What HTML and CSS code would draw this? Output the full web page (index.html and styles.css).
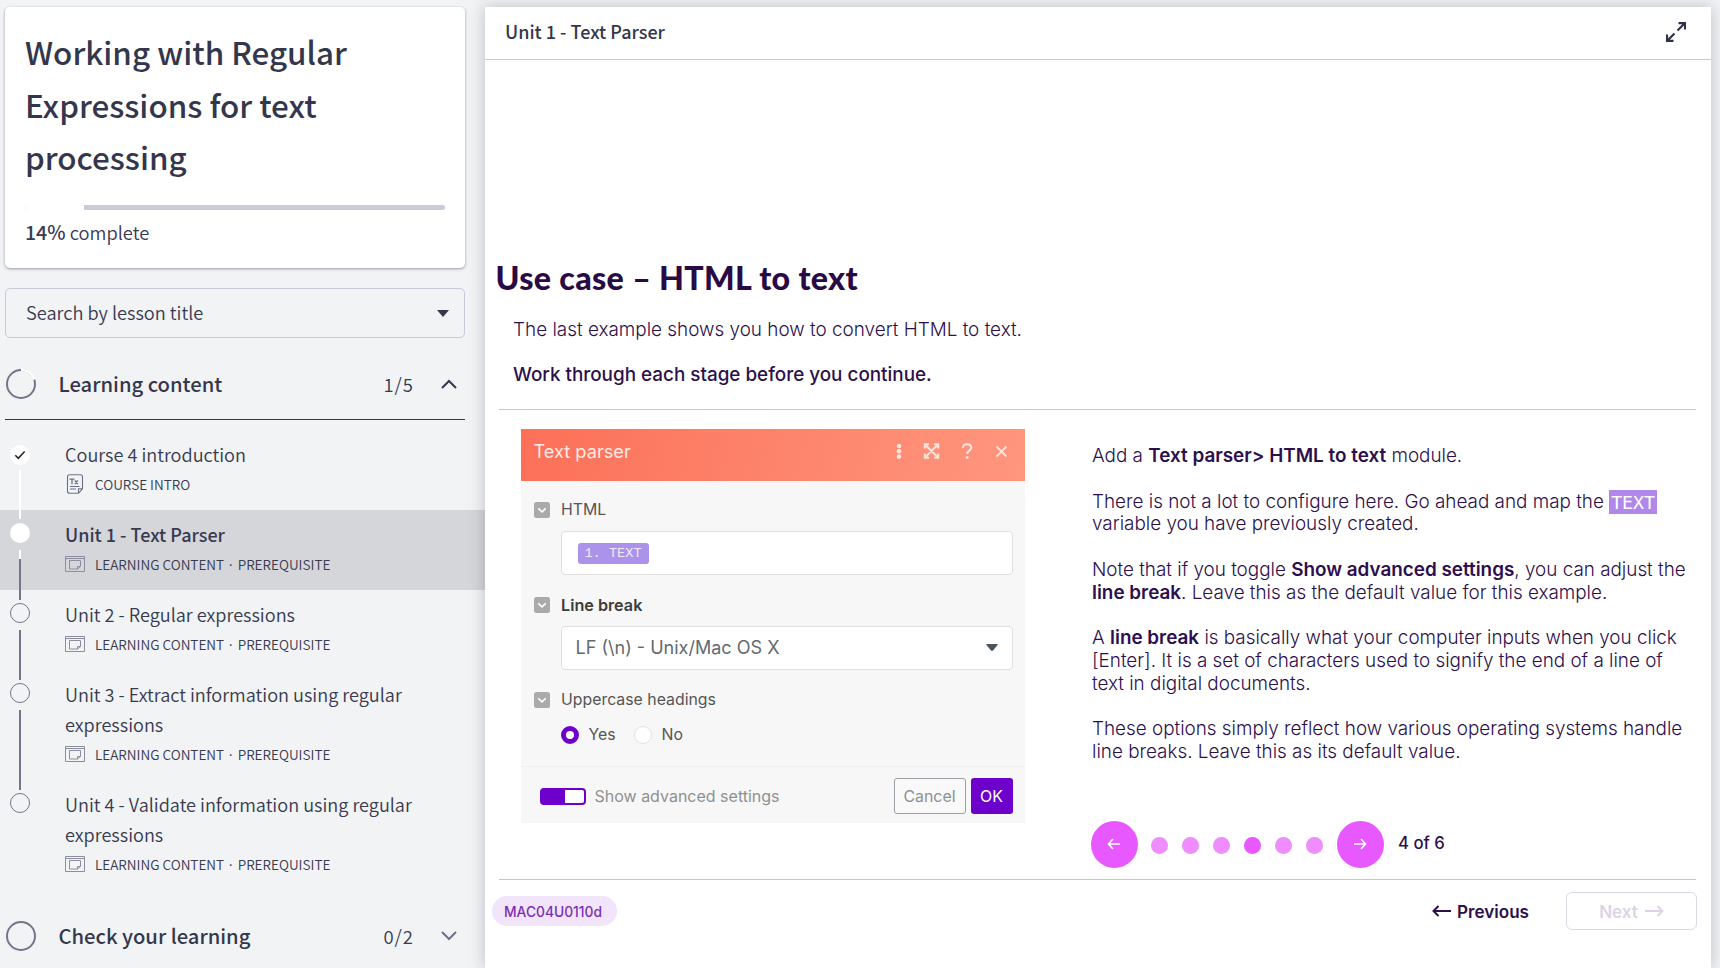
FILE: index.html
```html
<!DOCTYPE html>
<html lang="en">
<head>
<meta charset="utf-8">
<title>Unit 1 - Text Parser</title>
<link rel="stylesheet" href="styles.css">
</head>
<body>
<svg class="defs" aria-hidden="true">
  <symbol id="lesson" viewBox="0 0 20 16">
    <g fill="none" stroke="#8b8e9e" stroke-width="1">
      <path d="M.5.5h19v15H.5zM.5 2.500h19"/>
      <path d="M4.500 4.500h11v6l-3 2.500h-8zM12.500 13v-2.500h3"/>
    </g>
  </symbol>
  <symbol id="fold" viewBox="0 0 16 16">
    <rect width="16" height="16" rx="2.500" fill="#aaa"/>
    <path d="M4.300 6.300L8 9.800l3.700-3.500" fill="none" stroke="#fff" stroke-width="1.600"/>
  </symbol>
</svg>
<div class="app">
  <aside class="side">
    <section class="course">
      <h1>Working with Regular Expressions for text processing</h1>
      <div class="progress"><span style="width:14%"></span></div>
      <p class="done"><b>14%</b> complete</p>
    </section>
    <div class="search"><span>Search by lesson title</span>
      <svg width="12" height="7" viewBox="0 0 12 7"><path d="M0 0h12L6 7z" fill="#34374c"/></svg></div>
    <div class="group open">
      <svg class="ring" width="30" height="30" viewBox="0 0 30 30" fill="none" stroke-width="2">
        <circle cx="15" cy="15" r="14" stroke="#73768a"/>
        <path d="M15 1A14 14 0 0 1 28.500 10.500" stroke="#fff" stroke-width="2.500"/></svg>
      <h2>Learning content</h2><span class="count">1/5</span>
      <svg width="16" height="10" viewBox="0 0 16 10"><path d="M1 9l7-7 7 7" fill="none" stroke="#34374c" stroke-width="2"/></svg>
    </div>
    <ol class="lessons">
      <li class="lesson done-item">
        <div class="rail"><svg width="20" height="20" viewBox="0 0 20 20"><circle cx="10" cy="10" r="10" fill="#fff"/><path d="M5.300 10.300l3 3 6.300-6.800" fill="none" stroke="#222" stroke-width="1.500"/></svg><i class="seg white"></i></div>
        <div class="info"><h3>Course 4 introduction</h3>
          <p><svg class="doc" width="20" height="20" viewBox="0 0 20 20"><path d="M4.500.700h11a2 2 0 0 1 2 2v12l-4 4.600h-9a2 2 0 0 1-2-2V2.700a2 2 0 0 1 2-2zM13.500 19v-4.200h4M5 12.500h9.500M5 15h6" fill="none" stroke="#6d7187" stroke-width="1.100"/><path d="M4.500 5.200h5M7 5.200v5M9.800 6.300l3 3.800M12.800 6.300l-3 3.800" stroke="#6d7187" stroke-width="1.300"/></svg>COURSE INTRO</p></div>
      </li>
      <li class="lesson active">
        <div class="rail"><i class="dot full"></i><i class="seg mixed"></i></div>
        <div class="info"><h3>Unit 1 - Text Parser</h3>
          <p><svg width="20" height="16"><use href="#lesson"/></svg>LEARNING CONTENT · PREREQUISITE</p></div>
      </li>
      <li class="lesson">
        <div class="rail"><i class="dot"></i><i class="seg"></i></div>
        <div class="info"><h3>Unit 2 - Regular expressions</h3>
          <p><svg width="20" height="16"><use href="#lesson"/></svg>LEARNING CONTENT · PREREQUISITE</p></div>
      </li>
      <li class="lesson">
        <div class="rail"><i class="dot"></i><i class="seg"></i></div>
        <div class="info"><h3>Unit 3 - Extract information using regular<br>expressions</h3>
          <p><svg width="20" height="16"><use href="#lesson"/></svg>LEARNING CONTENT · PREREQUISITE</p></div>
      </li>
      <li class="lesson">
        <div class="rail"><i class="dot"></i></div>
        <div class="info"><h3>Unit 4 - Validate information using regular<br>expressions</h3>
          <p><svg width="20" height="16"><use href="#lesson"/></svg>LEARNING CONTENT · PREREQUISITE</p></div>
      </li>
    </ol>
    <div class="group last">
      <svg class="ring" width="30" height="30" viewBox="0 0 30 30"><circle cx="15" cy="15" r="14" fill="none" stroke="#73768a" stroke-width="2"/></svg>
      <h2>Check your learning</h2><span class="count">0/2</span>
      <svg width="16" height="10" viewBox="0 0 16 10"><path d="M1 1l7 7 7-7" fill="none" stroke="#6d7187" stroke-width="2"/></svg>
    </div>
  </aside>

  <main class="main">
    <header class="bar"><span>Unit 1 - Text Parser</span>
      <svg width="20" height="20" viewBox="0 0 20 20" fill="none" stroke="#2f3147" stroke-width="2.200"><path d="M11.500 8.500l7-7M12.500 1.200H19V7.500M8.500 11.500l-7 7M1 12.500v6.300h6.500"/></svg>
    </header>
    <div class="slide">
      <h2 class="heading">Use case – HTML to text</h2>
      <p class="lead">The last example shows you how to convert HTML to text.</p>
      <p class="lead strong">Work through each stage before you continue.</p>
      <div class="cols">
        <section class="module">
          <header class="mhead"><span>Text parser</span>
            <svg width="116" height="18" viewBox="0 0 116 18" fill="none" stroke="#ffe3dc" stroke-width="1.600">
              <g fill="#ffe3dc" stroke="none"><circle cx="4" cy="4" r="2.300"/><circle cx="4" cy="9.300" r="2.300"/><circle cx="4" cy="14.600" r="2.300"/></g>
              <path d="M30 2.500l13 13M43 2.500l-13 13M29.800 6.500V2.300H34M39 2.300h4.200v4.200M43.200 11.500v4.200H39M34 15.700h-4.200v-4.200" stroke-width="2"/>
              <path d="M68 5.700c.2-4.700 8.200-4.500 8.200.1 0 3-4.100 2.700-4.100 6.200" stroke-width="2.200"/><circle cx="72.100" cy="15.400" r="1.500" fill="#ffe3dc" stroke="none"/>
              <path d="M101.500 4.500l10 10M111.500 4.500l-10 10" stroke-width="1.900"/>
            </svg></header>
          <div class="mbody">
            <div class="label"><svg width="16" height="16"><use href="#fold"/></svg>HTML</div>
            <div class="field"><span class="tag">1. TEXT</span></div>
            <div class="label bold"><svg width="16" height="16"><use href="#fold"/></svg>Line break</div>
            <div class="field select"><span>LF (\n) - Unix/Mac OS X</span>
              <svg width="12" height="7" viewBox="0 0 12 7"><path d="M1 0h10q1 .3.600 1L7 6.500q-1 .8-2 0L.4 1Q0 .3 1 0z" fill="#49545c"/></svg></div>
            <div class="label"><svg width="16" height="16"><use href="#fold"/></svg>Uppercase headings</div>
            <div class="radios"><i class="radio on"></i><span>Yes</span><i class="radio"></i><span>No</span></div>
          </div>
          <footer class="mfoot"><i class="toggle"></i><span>Show advanced settings</span>
            <button class="cancel">Cancel</button><button class="ok">OK</button></footer>
        </section>
        <section class="text">
          <p>Add a <b>Text parser&gt; HTML to text</b> module.</p>
          <p>There is not a lot to configure here. Go ahead and map the <span class="chip">TEXT</span><br>variable you have previously created.</p>
          <p>Note that if you toggle <b>Show advanced settings</b>, you can adjust the<br><b>line break</b>. Leave this as the default value for this example.</p>
          <p>A <b>line break</b> is basically what your computer inputs when you click<br>[Enter]. It is a set of characters used to signify the end of a line of<br>text in digital documents.</p>
          <p>These options simply reflect how various operating systems handle<br>line breaks. Leave this as its default value.</p>
          <nav class="pager">
            <span class="arrow"><svg width="14" height="12" viewBox="0 0 14 12"><path d="M6 1L1.500 6 6 11M1.500 6H13" fill="none" stroke="#fff" stroke-width="1.700"/></svg></span>
            <span class="dots"><i></i><i></i><i></i><i class="on"></i><i></i><i></i></span>
            <span class="arrow"><svg width="14" height="12" viewBox="0 0 14 12"><path d="M8 1l4.500 5L8 11M12.500 6H1" fill="none" stroke="#fff" stroke-width="1.700"/></svg></span>
            <span class="page">4 of 6</span>
          </nav>
        </section>
      </div>
      <footer class="foot">
        <span class="code">MAC04U0110d</span>
        <a class="prev"><svg width="19" height="12" viewBox="0 0 19 12"><path d="M6.500 1L1.500 6l5 5M1.500 6H19" fill="none" stroke="#2d0f4d" stroke-width="2"/></svg>Previous</a>
        <a class="next">Next<svg width="19" height="12" viewBox="0 0 19 12"><path d="M12.500 1l5 5-5 5M17.500 6H0" fill="none" stroke="#ddd3e6" stroke-width="2"/></svg></a>
      </footer>
    </div>
  </main>
</div>
</body>
</html>
```
FILE: styles.css
```css
* { box-sizing: border-box; margin: 0; padding: 0; }
body { height: 968px; overflow: hidden; background: #f1f3f5; color: #383a50; font-family: "Noto Sans CJK JP", sans-serif; }
.defs { display: none; }
svg { flex: none; display: block; }
i { display: block; flex: none; }
.app { display: flex; height: 968px; padding-top: 7px; }

.side { width: 485px; flex: none; }
.course { width: 460px; height: 261px; margin-left: 5px; padding: 19px 20px 0 20px; background: #fff; border-radius: 5px; box-shadow: 0 1px 3px rgba(40, 42, 60, .45); }
.course h1 { font-size: 31.42px; font-weight: 500; line-height: 52.5px; color: #34374c; width: 400px; }
.progress { margin-top: 21.500px; height: 5px; border-radius: 3px; background: #c9cbd7; width: 420px; overflow: hidden; }
.progress span { display: block; height: 5px; background: #fff; }
.done { font-size: 18.35px; line-height: 30px; margin-top: 7px; font-weight: 350; }
.done b { font-size: 19.500px; font-weight: 500; }
.search { width: 460px; height: 50px; margin: 20px 0 0 5px; padding: 0 15px 0 20px; border: 1px solid #c7cad8; border-radius: 5px; display: flex; align-items: center; justify-content: space-between; font-size: 18.200px; line-height: 30px; font-weight: 350; }
.search span { margin-top: -3px; }
.group { display: flex; align-items: center; width: 460px; margin-left: 5px; height: 82px; padding-right: 8px; }
.group.open { border-bottom: 1px solid #34374c; padding-top: 10px; }
.group.last { margin-top: 5px; }
.group h2 { font-size: 20.200px; font-weight: 500; line-height: 30px; margin: 0 auto 0 22.500px; color: #34374c; }
.group .ring { margin-left: 1px; }
.count { font-size: 18.500px; letter-spacing: 1px; margin-right: 27px; font-weight: 350; }
.lessons { list-style: none; padding-top: 10px; }
.lesson { display: flex; padding: 10px 0; width: 485px; }
.active { background: #d5d6da; }
.rail { width: 20px; margin: 3px 35px -20px 10px; display: flex; flex-direction: column; align-items: center; }
.done-item .rail { margin-top: 5px; margin-bottom: -19px; }
.dot { width: 20px; height: 20px; border: 1.500px solid #73768a; border-radius: 50%; }
.dot.full { background: #fff; border: 0; }
.seg { width: 2px; flex: 1; margin: 7px 0 0; background: #73768a; }
.seg.white { background: #fff; margin-top: 5px; }
.seg.mixed { background: linear-gradient(#fff 9px, #73768a 9px); }
.info { margin: -1px 0 1px; }
.info h3 { font-size: 18.120px; line-height: 30px; font-weight: 350; }
.active h3 { font-weight: 500; font-size: 18px; }
.info p { display: flex; align-items: center; gap: 10px; height: 30px; font-size: 13.560px; font-weight: 350; white-space: nowrap; }

.main { width: 1226px; height: 961px; background: #fff; box-shadow: 0 0 15px rgba(30, 35, 50, .25); }
.bar { height: 53px; border-bottom: 1px solid #c7cad5; padding: 0 25px 0 20px; display: flex; align-items: center; justify-content: space-between; font-size: 18px; font-weight: 500; line-height: 30px; color: #34374c; }
.bar span { margin-top: -4px; }
.bar svg { margin-top: -2px; }
.slide { font-family: Inter, sans-serif; color: #2d0f4d; padding: 197px 15px 0 13.500px; }
.heading { font: 900 32.200px/42px Lato, sans-serif; color: #2a0a45; margin-left: -3px; letter-spacing: .33px; white-space: nowrap; }
.lead { font-size: 18.900px; line-height: 24px; font-weight: 300; margin: 19px 0 0 14.500px; }
.lead.strong { font-weight: 500; font-size: 18.860px; margin-top: 21px; }
.cols { display: flex; height: 471px; margin-top: 22px; border-top: 1.500px solid #cbc3cc; border-bottom: 1.500px solid #cbc3cc; }

.module { width: 504px; height: 394px; margin: 19px 1px 0 22px; background: #f7f7f7; flex: none; display: flex; flex-direction: column; }
.mhead { height: 52px; padding: 0 13.500px 0 13px; display: flex; align-items: center; justify-content: space-between; background: linear-gradient(105deg, #fc7058, #ff967e); color: #ffe9e4; font-size: 18.200px; }
.mhead span { margin-top: -8px; }
.mhead svg { margin-top: -9px; }
.mbody { padding: 18.500px 12px 0 13px; height: 286px; border-bottom: 1px solid #efefef; }
.label { display: flex; align-items: center; gap: 11.500px; height: 20px; font-size: 15.850px; color: #555; }
.label.bold { font-weight: 600; font-size: 16.200px; color: #3c3c3c; margin-top: 20px; }
.field { margin: 11px 0 0 27px; height: 44px; border: 1px solid #e0e0e0; border-radius: 4px; background: #fff; display: flex; align-items: center; padding: 0 14px 0 16px; }
.tag { height: 21px; width: 71px; text-align: center; background: #ab92ea; color: #f1eafc; border-radius: 3px; font: 13.600px/21px "Liberation Mono", monospace; margin-top: 2px; }
.select { justify-content: space-between; font-size: 18.040px; color: #626a70; padding-left: 14px; margin-bottom: 20px; }
.select span { margin-top: -1px; }
.radios { display: flex; align-items: center; margin: 15px 0 0 27px; height: 20px; font-size: 15.800px; color: #555; }
.radio { width: 18px; height: 18px; border-radius: 50%; background: #fff; border: 1px solid #e2e2e2; }
.radio.on { border: 5.500px solid #6e00cc; }
.radios span { margin-left: 10px; margin-right: 18px; }
.mfoot { height: 56px; padding: 2px 12px 0 19px; display: flex; align-items: center; font-size: 16px; color: #909090; }
.toggle { width: 46px; height: 17px; border: 2px solid #6e00cc; border-radius: 4px; background: linear-gradient(90deg, #6e00cc 23px, #fff 23px); }
.mfoot span { margin: 0 auto 0 9px; }
.mfoot button { height: 36px; border-radius: 3px; font: 15.860px Inter, sans-serif; }
.cancel { width: 72px; border: 1px solid #9aa0a5; background: #f9f9f9; color: #8c9195; }
.ok { width: 42px; margin-left: 5px; border: 0; background: #6e00cc; color: #fff; }

.text { margin-left: 66.500px; padding-top: 35px; font-size: 18.860px; line-height: 22.770px; font-weight: 300; white-space: nowrap; }
.text p { margin-bottom: 22.770px; }
.text b { font-weight: 600; }
.chip { display: inline-block; height: 24px; line-height: 25px; vertical-align: middle; margin: -2px 0 -1px; padding: 0 2px; background: #b088ea; color: #fff; font-family: "DejaVu Sans Mono", monospace; font-size: 18.270px; }
.pager { display: flex; align-items: center; margin-top: 57px; height: 48px; margin-left: -1.500px; }
.arrow { width: 47.500px; height: 47.500px; border-radius: 50%; background: #e858ff; display: flex; align-items: center; justify-content: center; padding-bottom: 1px; }
.dots { display: flex; gap: 14.300px; margin: 2px 14px 0 13px; }
.dots i { width: 16.700px; height: 16.700px; border-radius: 50%; background: #ef8dff; }
.dots .on { background: #e858ff; }
.page { margin-left: 14px; margin-top: -2px; font-size: 16.700px; font-weight: 500; }
.foot { display: flex; align-items: center; height: 62px; margin: 0 -1px 0 -7px; }
.code { width: 125px; height: 30px; border-radius: 15px; background: #f1e4fb; color: #7b2fb0; font-size: 13.800px; font-weight: 500; text-align: center; line-height: 32px; padding-right: 2px; }
.prev { margin-left: auto; display: flex; align-items: center; gap: 6px; font-size: 17.090px; font-weight: 600; }
.next { margin-left: 37px; width: 131px; height: 38px; border: 1.500px solid #dcd8e8; border-radius: 6px; display: flex; align-items: center; justify-content: center; gap: 7px; font-size: 17.090px; font-weight: 600; color: #ddd3e6; }
```
